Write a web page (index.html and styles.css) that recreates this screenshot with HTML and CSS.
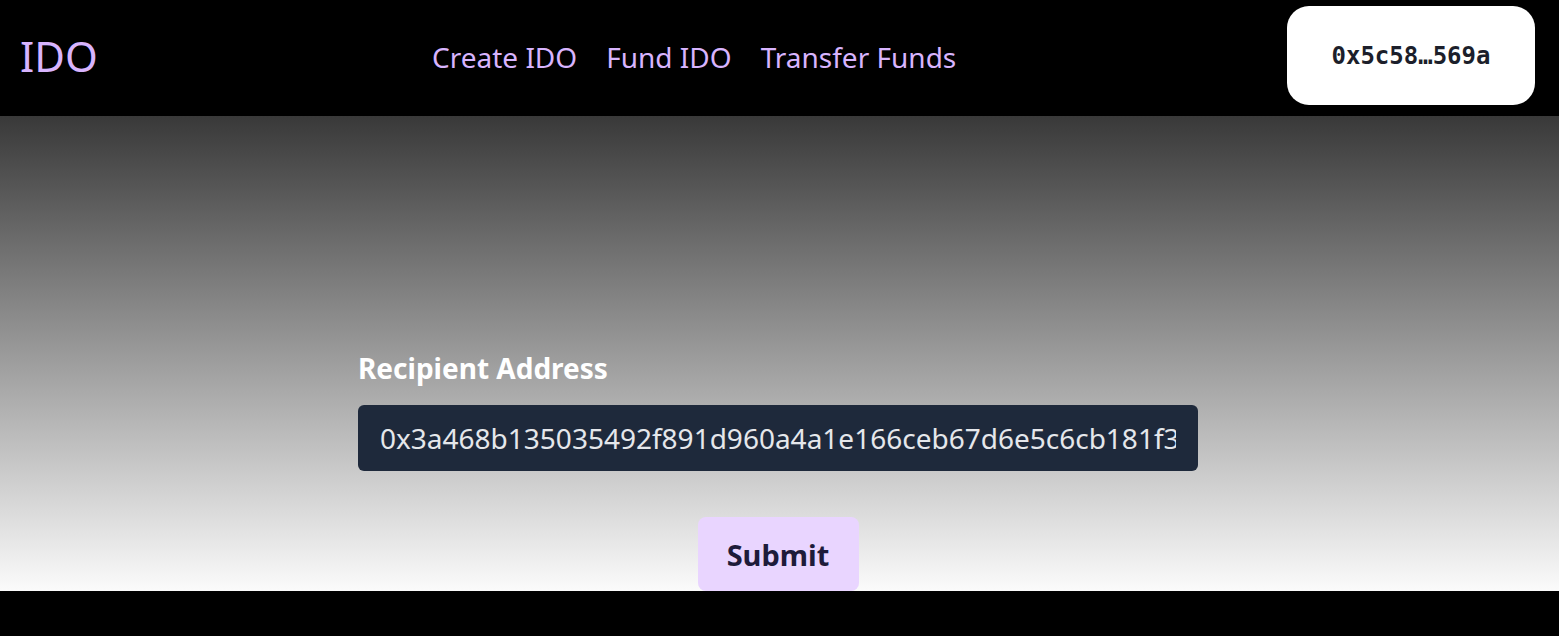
FILE: index.html
```html
<!DOCTYPE html>
<html lang="en">
<head>
<meta charset="utf-8">
<title>IDO</title>
<link rel="stylesheet" href="styles.css">
</head>
<body>
<header class="topbar">
  <div class="logo">IDO</div>
  <nav class="nav">
    <a class="nav-link" href="#">Create IDO</a>
    <a class="nav-link" href="#">Fund IDO</a>
    <a class="nav-link" href="#">Transfer Funds</a>
  </nav>
  <button class="wallet">0x5c58…569a</button>
</header>
<main class="main">
  <form class="form">
    <label class="label" for="recipient">Recipient Address</label>
    <input class="input" id="recipient" type="text" value="0x3a468b135035492f891d960a4a1e166ceb67d6e5c6cb181f3c2d9e">
    <div class="actions">
      <button class="submit" type="button">Submit</button>
    </div>
  </form>
</main>
<div class="bottom"></div>
</body>
</html>
```
FILE: styles.css
```css
* { box-sizing: border-box; }
html, body { margin: 0; padding: 0; }
body {
  background: #000;
  font-family: "Noto Sans", "Open Sans", sans-serif;
  width: 1559px;
  height: 636px;
  overflow: hidden;
}
.topbar {
  height: 116px;
  background: #000;
  display: flex;
  align-items: center;
  padding: 0 24px 0 20px;
}
.logo {
  color: #d8b4fe;
  font-size: 42px;
  line-height: 1;
  width: 412px;
  margin-top: -4px;
}
.nav {
  display: flex;
  gap: 29px;
  flex: 1;
  margin-top: -2px;
}
.nav-link {
  color: #d8b4fe;
  font-size: 28px;
  text-decoration: none;
}
.wallet {
  width: 248px;
  height: 99px;
  margin-top: -5px;
  background: #fff;
  border: none;
  border-radius: 22px;
  font-family: "DejaVu Sans Mono", monospace;
  font-weight: bold;
  font-size: 24px;
  color: #1c1f2b;
}
.main {
  height: 475px;
  background: linear-gradient(to bottom, #393939 0%, #fbfbfb 100%);
  display: flex;
  justify-content: center;
  align-items: flex-end;
  padding-right: 3px;
}
.form {
  width: 840px;
  display: flex;
  flex-direction: column;
}
.label {
  color: #fff;
  font-weight: bold;
  font-size: 28px;
  line-height: 40px;
  margin-bottom: 17px;
}
.input {
  width: 840px;
  height: 66px;
  background: #1e293b;
  border: none;
  border-radius: 6px;
  color: #e5e7eb;
  font-family: "Noto Sans", "Open Sans", sans-serif;
  font-size: 28px;
  padding: 0 22px;
  outline: none;
}
.actions {
  display: flex;
  justify-content: center;
  margin-top: 46px;
}
.submit {
  width: 161px;
  height: 74px;
  background: #e9d5ff;
  border: none;
  border-radius: 8px;
  color: #1e1b3a;
  font-family: "Noto Sans", "Open Sans", sans-serif;
  font-weight: bold;
  font-size: 29px;
}
.bottom {
  height: 45px;
  background: #000;
}
```
